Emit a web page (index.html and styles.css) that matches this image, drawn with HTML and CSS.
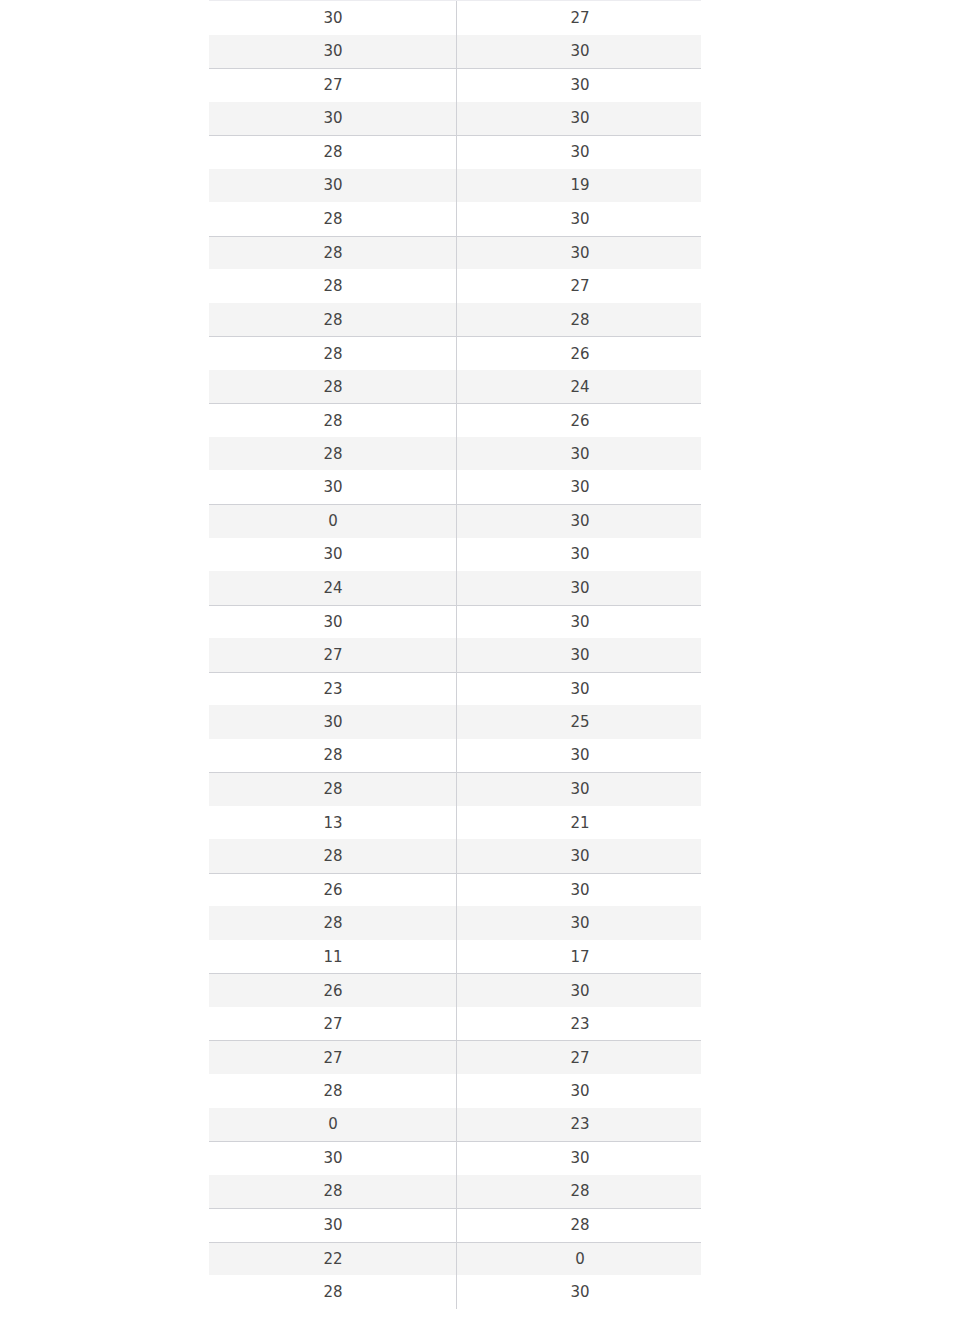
FILE: index.html
```html
<!DOCTYPE html>
<html lang="en">
<head>
<meta charset="utf-8">
<title>Scores</title>
<link rel="stylesheet" href="styles.css">
</head>
<body>
<div class="table">
  <div class="row"><div class="cell left">30</div><div class="cell right">27</div></div>
  <div class="row alt"><div class="cell left">30</div><div class="cell right">30</div></div>
  <div class="row ln"><div class="cell left">27</div><div class="cell right">30</div></div>
  <div class="row alt"><div class="cell left">30</div><div class="cell right">30</div></div>
  <div class="row ln"><div class="cell left">28</div><div class="cell right">30</div></div>
  <div class="row alt"><div class="cell left">30</div><div class="cell right">19</div></div>
  <div class="row"><div class="cell left">28</div><div class="cell right">30</div></div>
  <div class="row alt ln"><div class="cell left">28</div><div class="cell right">30</div></div>
  <div class="row"><div class="cell left">28</div><div class="cell right">27</div></div>
  <div class="row alt"><div class="cell left">28</div><div class="cell right">28</div></div>
  <div class="row ln"><div class="cell left">28</div><div class="cell right">26</div></div>
  <div class="row alt"><div class="cell left">28</div><div class="cell right">24</div></div>
  <div class="row ln"><div class="cell left">28</div><div class="cell right">26</div></div>
  <div class="row alt"><div class="cell left">28</div><div class="cell right">30</div></div>
  <div class="row"><div class="cell left">30</div><div class="cell right">30</div></div>
  <div class="row alt ln"><div class="cell left">0</div><div class="cell right">30</div></div>
  <div class="row"><div class="cell left">30</div><div class="cell right">30</div></div>
  <div class="row alt"><div class="cell left">24</div><div class="cell right">30</div></div>
  <div class="row ln"><div class="cell left">30</div><div class="cell right">30</div></div>
  <div class="row alt"><div class="cell left">27</div><div class="cell right">30</div></div>
  <div class="row ln"><div class="cell left">23</div><div class="cell right">30</div></div>
  <div class="row alt"><div class="cell left">30</div><div class="cell right">25</div></div>
  <div class="row"><div class="cell left">28</div><div class="cell right">30</div></div>
  <div class="row alt ln"><div class="cell left">28</div><div class="cell right">30</div></div>
  <div class="row"><div class="cell left">13</div><div class="cell right">21</div></div>
  <div class="row alt"><div class="cell left">28</div><div class="cell right">30</div></div>
  <div class="row ln"><div class="cell left">26</div><div class="cell right">30</div></div>
  <div class="row alt"><div class="cell left">28</div><div class="cell right">30</div></div>
  <div class="row"><div class="cell left">11</div><div class="cell right">17</div></div>
  <div class="row alt ln"><div class="cell left">26</div><div class="cell right">30</div></div>
  <div class="row"><div class="cell left">27</div><div class="cell right">23</div></div>
  <div class="row alt ln"><div class="cell left">27</div><div class="cell right">27</div></div>
  <div class="row"><div class="cell left">28</div><div class="cell right">30</div></div>
  <div class="row alt"><div class="cell left">0</div><div class="cell right">23</div></div>
  <div class="row ln"><div class="cell left">30</div><div class="cell right">30</div></div>
  <div class="row alt"><div class="cell left">28</div><div class="cell right">28</div></div>
  <div class="row ln"><div class="cell left">30</div><div class="cell right">28</div></div>
  <div class="row alt ln"><div class="cell left">22</div><div class="cell right">0</div></div>
  <div class="row"><div class="cell left">28</div><div class="cell right">30</div></div>
</div>
</body>
</html>
```

FILE: styles.css
```css
html, body {
  margin: 0;
  padding: 0;
  background: #ffffff;
}

body {
  font-family: "DejaVu Sans", "Liberation Sans", sans-serif;
  font-size: 15px;
  color: #454545;
}

.table {
  width: 492px;
  margin-left: 209px;
  display: flex;
  flex-direction: column;
  border-top: 1px solid #ececf0;
}

.row {
  display: flex;
  height: 33.54px;
  box-sizing: border-box;
  background: #ffffff;
}

.row.alt {
  background: #f4f4f4;
}

.row.ln {
  border-top: 1px solid #d0d1d6;
}

.cell {
  display: flex;
  align-items: center;
  justify-content: center;
}

.cell.left {
  width: 246px;
  padding-left: 1px;
  border-right: 1px solid #d0d1d6;
}

.cell.right {
  flex: 1;
  padding-left: 2px;
}
```
